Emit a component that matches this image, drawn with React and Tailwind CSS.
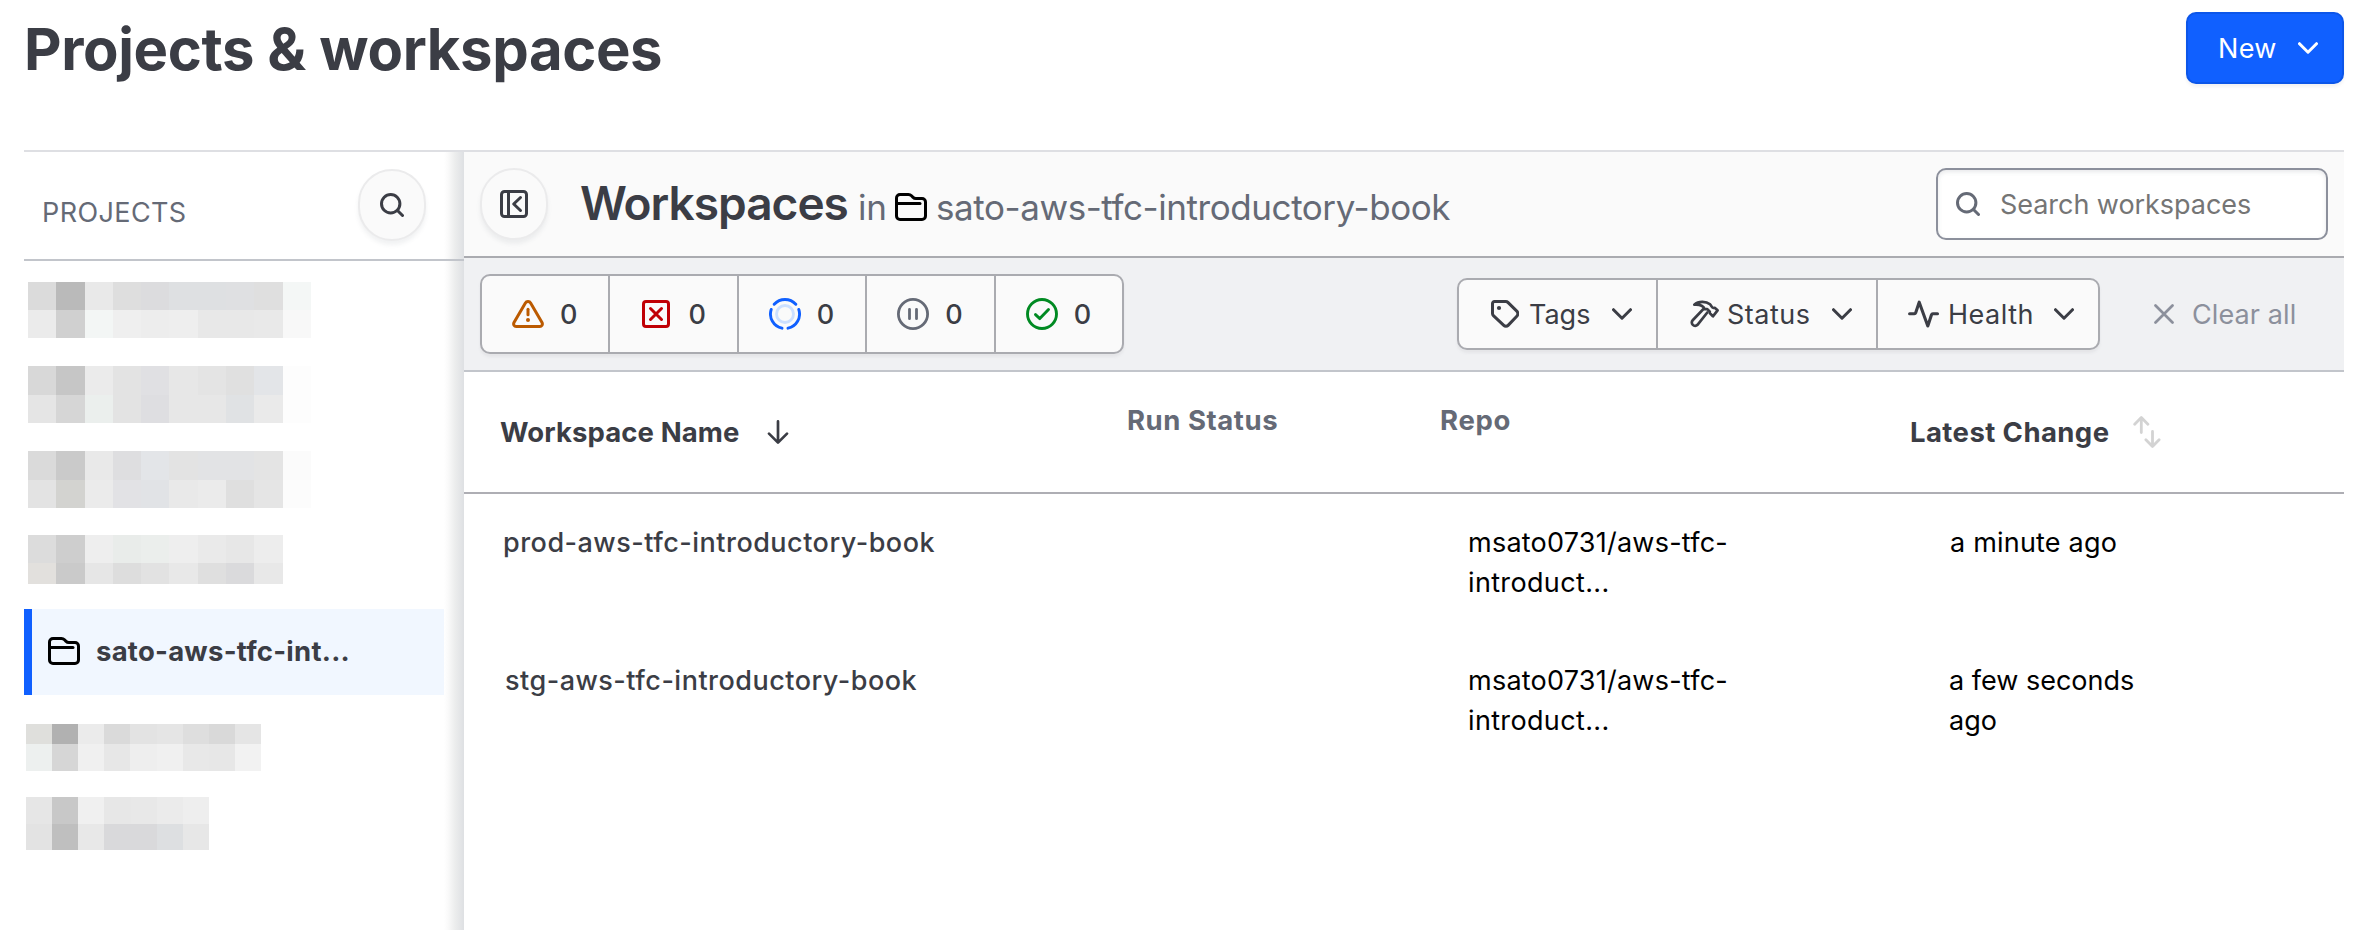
function Icon({ w, h, sw = 3, className = "", children }) {
  return (
    <svg
      width={w}
      height={h}
      viewBox={`0 0 ${w} ${h}`}
      fill="none"
      stroke="currentColor"
      strokeWidth={sw}
      strokeLinecap="round"
      strokeLinejoin="round"
      className={`shrink-0 ${className}`}
    >
      {children}
    </svg>
  );
}

const SearchIcon = ({ className }) => (
  <Icon w={24} h={24} className={className}>
    <circle cx="10.7" cy="10.7" r="9.2" />
    <path d="M17.5 17.5l5 5" />
  </Icon>
);

const Chevron = ({ className }) => (
  <Icon w={20} h={12} className={className}>
    <path d="M1.5 1.7L10 10.2L18.5 1.7" />
  </Icon>
);

const Folder = ({ className }) => (
  <Icon w={32} h={28} className={className}>
    <path d="M1.5 5a3.5 3.5 0 0 1 3.5-3.5h8.4c1.3 0 2.3.5 3.1 1.3l1.3 1.3c.8.8 1.8 1.4 3.1 1.4H27A3.5 3.5 0 0 1 30.5 9v14a3.5 3.5 0 0 1-3.5 3.5H5A3.5 3.5 0 0 1 1.5 23z" />
    <path d="M2 10.4h23" />
  </Icon>
);

const CollapseIcon = () => (
  <Icon w={28} h={28}>
    <rect x="1.5" y="1.5" width="25" height="25" rx="3" />
    <path d="M8.5 1.5v25" />
    <path d="M20.5 7.5L13.7 14l6.8 6.5" />
  </Icon>
);

const WarningIcon = () => (
  <Icon w={32} h={28} className="text-[#bb5a00]">
    <path d="M13.4 3L2 22.6a2.6 2.6 0 0 0 2.2 3.9h23.6a2.6 2.6 0 0 0 2.2-3.9L18.6 3a3 3 0 0 0-5.2 0z" />
    <path d="M16 9.3v5.4" />
    <path d="M16 20h.02" strokeWidth="4" />
  </Icon>
);

const ErrorIcon = () => (
  <Icon w={32} h={28} className="text-[#c00005]">
    <rect x="3.5" y="1.5" width="25" height="25" rx="2.5" />
    <path d="M10.5 8.5l11 11M21.5 8.5l-11 11" />
  </Icon>
);

const RunningIcon = () => (
  <Icon w={32} h={32} sw={2.9} className="text-[#1060ff]">
    <path d="M5.2 6.3a14.5 14.5 0 0 1 21.6 0M29.8 11.5A14.5 14.5 0 0 1 19 30.2M13 30.2A14.5 14.5 0 0 1 2.2 11.5" />
    <circle cx="16" cy="16" r="8.5" stroke="#cce0ff" />
  </Icon>
);

const PausedIcon = () => (
  <Icon w={32} h={32} sw={2.8} className="text-[#656a76]">
    <circle cx="16" cy="16" r="14.6" />
    <path d="M12.5 11.3v9.4M19.5 11.3v9.4" />
  </Icon>
);

const SuccessIcon = () => (
  <Icon w={32} h={32} sw={2.9} className="text-[#008a22]">
    <circle cx="16" cy="16" r="14.5" />
    <path d="M9.5 16.6l4.3 4L22.5 11.5" />
  </Icon>
);

const TagIcon = () => (
  <Icon w={28} h={28}>
    <path d="M1.5 3.5a2 2 0 0 1 2-2h11.3a3 3 0 0 1 2.1.9l8.9 8.7a3.6 3.6 0 0 1 0 5.1l-8.7 9.2a3 3 0 0 1-4.3 0l-10.4-9.8a3 3 0 0 1-.9-2.1z" />
    <circle cx="8" cy="8" r="2.1" fill="currentColor" stroke="none" />
  </Icon>
);

const HammerIcon = () => (
  <Icon w={32} h={32} sw={2.7}>
    <path d="M6.3 6.7C10.5 2.9 18 3 22 6.3c1.5 1.3 1.6 3.6 3.4 3.7l1.3-.2 2.9 2.5-4.7 6-3.1-3.2v-1.5l-2.5-2.5-2.7.1c-.8-3-4.2-4.9-10.3-4.5z" />
    <path d="M15.2 11.3L4.7 22.2a3.3 3.3 0 0 0 4.8 4.6L19.3 14.5" />
  </Icon>
);

const HealthIcon = () => (
  <Icon w={32} h={28} sw={3.1}>
    <path d="M1.6 13.7H6.3a1.5 1.5 0 0 0 1.4-1L11.2 2.2 19.8 26l3.7-11.3a1.5 1.5 0 0 1 1.4-1H29.5" />
  </Icon>
);

const CloseIcon = () => (
  <Icon w={20} h={20} sw={2.7}>
    <path d="M1.5 1.5l17 17M18.5 1.5l-17 17" />
  </Icon>
);

const ArrowDown = () => (
  <Icon w={22} h={24} sw={2.7}>
    <path d="M11 1.4v21M2 13.6l9 9 9-9" />
  </Icon>
);

const SwapIcon = () => (
  <Icon w={28} h={32} sw={2.8} className="text-[#d3d3d3]">
    <path d="M8.3 16.5V1.6M1.7 8.3l6.6-6.7 6.6 6.7M19.5 15.5v14.9M12.9 23.7l6.6 6.7 6.6-6.7" />
  </Icon>
);

const redacted = [
  {
    box: "mt-[21px] ml-[4px] h-[56px] w-[283px]",
    rows: [
      ["bg-[#dbdbdb]", "bg-[#bababa]", "bg-[#e9e9e9]", "bg-[#dedede]", "bg-[#dcdcde]", "bg-[#dee0e2]", "bg-[#dee0e2]", "bg-[#dfe0e2]", "bg-[#dfdfdf]", "bg-[#f4f7f6]"],
      ["bg-[#ebebeb]", "bg-[#d0d0d0]", "bg-[#f3f6f5]", "bg-[#efefef]", "bg-[#ededed]", "bg-[#eeeeee]", "bg-[#e8e8e8]", "bg-[#e8e8e8]", "bg-[#e9e9e9]", "bg-[#f8f8f8]"],
    ],
  },
  {
    box: "mt-[28px] ml-[4px] h-[57px] w-[283px]",
    rows: [
      ["bg-[#d8d8d8]", "bg-[#c6c6c6]", "bg-[#ebebeb]", "bg-[#e3e3e3]", "bg-[#e0e0e3]", "bg-[#e7e7e7]", "bg-[#e4e4e4]", "bg-[#e0e0e0]", "bg-[#e3e5e8]", "bg-[#fdfdfd]"],
      ["bg-[#e5e5e5]", "bg-[#d6d6d6]", "bg-[#ebefed]", "bg-[#e3e3e3]", "bg-[#dedee1]", "bg-[#e7e7e7]", "bg-[#e7e7e7]", "bg-[#e0e2e4]", "bg-[#eaeaea]", "bg-[#fdfdfd]"],
    ],
  },
  {
    box: "mt-[28px] ml-[4px] h-[57px] w-[283px]",
    rows: [
      ["bg-[#dadada]", "bg-[#cacaca]", "bg-[#e9e9e9]", "bg-[#dedee0]", "bg-[#e3e5e8]", "bg-[#e3e3e3]", "bg-[#e2e3e5]", "bg-[#e2e3e5]", "bg-[#e4e4e4]", "bg-[#fbfbfb]"],
      ["bg-[#e3e3e3]", "bg-[#d3d3d0]", "bg-[#ebebeb]", "bg-[#e2e2e5]", "bg-[#e1e3e6]", "bg-[#e9e9e9]", "bg-[#ebebeb]", "bg-[#dfdfdf]", "bg-[#e5e5e5]", "bg-[#fcfcfc]"],
    ],
  },
  {
    box: "mt-[27px] ml-[4px] h-[49px] w-[283px]",
    rows: [
      ["bg-[#dcdcdc]", "bg-[#cecece]", "bg-[#eeeeee]", "bg-[#e9ecea]", "bg-[#ebeeec]", "bg-[#eeeeee]", "bg-[#eaeaea]", "bg-[#e7e7e7]", "bg-[#ededed]", "bg-white"],
      ["bg-[#e2e0dd]", "bg-[#cacaca]", "bg-[#e6e6e6]", "bg-[#dddddd]", "bg-[#e2e2e2]", "bg-[#e8e8e8]", "bg-[#dfdfdf]", "bg-[#dadadc]", "bg-[#e8e8e8]", "bg-white"],
    ],
  },
  {
    box: "mt-[29px] ml-[2px] h-[47px] w-[235px]",
    rows: [
      ["bg-[#dfdfdc]", "bg-[#b1b1b1]", "bg-[#ebebeb]", "bg-[#dadada]", "bg-[#e3e3e3]", "bg-[#e5e5e5]", "bg-[#dedede]", "bg-[#d9d9d9]", "bg-[#e5e5e5]"],
      ["bg-[#edf0ef]", "bg-[#d6d6d6]", "bg-[#f0f0f0]", "bg-[#e7e7e7]", "bg-[#eeeeee]", "bg-[#f0f0f0]", "bg-[#e8e8e8]", "bg-[#e7e7e7]", "bg-[#f2f2f2]"],
    ],
  },
  {
    box: "mt-[26px] ml-[2px] h-[53px] w-[183px]",
    rows: [
      ["bg-[#e6e6e6]", "bg-[#c8c8c8]", "bg-[#f0f0f0]", "bg-[#e7e7e7]", "bg-[#e8e8e8]", "bg-[#ebebeb]", "bg-[#eeeeee]"],
      ["bg-[#e3e3e3]", "bg-[#bfbfbf]", "bg-[#e8e8e8]", "bg-[#d9d9db]", "bg-[#d9d9db]", "bg-[#dddfe1]", "bg-[#e7e7e7]"],
    ],
  },
];

const rowHeights = [
  ["flex-1", "flex-1"],
  ["flex-1", "flex-1"],
  ["flex-1", "flex-1"],
  ["h-[28px]", "flex-1"],
  ["h-[20px]", "flex-1"],
  ["flex-1", "flex-1"],
];

function Redacted({ index }) {
  const item = redacted[index];
  return (
    <div className={`flex flex-col ${item.box}`}>
      {item.rows.map((row, r) => (
        <div key={r} className={`flex ${rowHeights[index][r]}`}>
          {row.map((c, i) => (
            <div key={i} className={`flex-1 ${c}`} />
          ))}
        </div>
      ))}
    </div>
  );
}

function RoundButton({ className = "", children }) {
  return (
    <button
      className={`flex h-[72px] w-[68px] shrink-0 items-center justify-center rounded-[34px] border-2 border-[#ebebec] bg-[#fafafa] text-[#3b3d45] shadow-[0_4px_4px_rgba(101,106,118,0.09)] ${className}`}
    >
      {children}
    </button>
  );
}

const statuses = [WarningIcon, ErrorIcon, RunningIcon, PausedIcon, SuccessIcon];

export default function App() {
  return (
    <div className="flex h-[930px] w-[2374px] flex-col overflow-hidden bg-white pr-[30px] pl-6 font-['Inter',sans-serif] text-[27px] leading-[40px] text-[#3b3d45]">
      <header className="flex h-[150px] items-start justify-between">
        <h1 className="pt-[9px] text-[58px] leading-[80px] font-bold tracking-[-0.38px]">
          Projects &amp; workspaces
        </h1>
        <button className="mt-3 flex h-[72px] w-[158px] items-center rounded-[10px] border-2 border-[#0c56e9] bg-[#1060ff] pl-[30px] text-white shadow-[0_3px_3px_rgba(101,106,118,0.08)]">
          <span className="w-[80px] pt-px text-left tracking-[0.3px]">New</span>
          <Chevron />
        </button>
      </header>

      <div className="flex flex-1 border-t-2 border-[#dedfe3]">
        <aside className="flex w-[440px] flex-col bg-[linear-gradient(to_left,#dee0e3_0px,#eceded_9px,#fafafa_16px,#ffffff_20px)]">
          <div className="flex h-[109px] items-start border-b-2 border-[#c2c5cb] pl-[18px]">
            <h2 className="w-[316px] pt-[41px] tracking-[0.4px] text-[#656a76]">PROJECTS</h2>
            <RoundButton className="mt-[17px]">
              <SearchIcon />
            </RoundButton>
          </div>
          <Redacted index={0} />
          <Redacted index={1} />
          <Redacted index={2} />
          <Redacted index={3} />
          <div className="mt-[25px] flex h-[86px] w-[420px] items-center border-l-8 border-[#1060ff] bg-[#f1f7ff] pl-4">
            <Folder className="-mt-[2px] text-black" />
            <span className="-mt-[3px] pl-[16px] text-[27.5px] font-bold tracking-[0.25px]">
              sato-aws-tfc-int...
            </span>
          </div>
          <Redacted index={4} />
          <Redacted index={5} />
        </aside>

        <main className="flex flex-1 flex-col">
          <div className="flex h-[106px] items-start justify-between border-b-2 border-[#aaabb0] bg-[#fafafa] pt-4 pr-4 pl-4">
            <div className="flex">
              <RoundButton>
                <CollapseIcon />
              </RoundButton>
              <div className="flex h-[72px] items-baseline pt-[5px] pl-[32px]">
                <h2 className="text-[46px] leading-[60px] font-semibold tracking-[-1px]">Workspaces</h2>
                <span className="pl-[10px] text-[35px] text-[#656a76]">in</span>
                <Folder className="relative top-[1px] ml-[8px] text-black" />
                <span className="pl-[9px] text-[35px] tracking-[-0.43px] text-[#656a76]">
                  sato-aws-tfc-introductory-book
                </span>
              </div>
            </div>
            <div className="flex h-[72px] w-[392px] items-center rounded-[10px] border-2 border-[#8c909c] bg-white pl-[18px] shadow-[inset_0_2px_4px_rgba(101,106,118,0.15)]">
              <SearchIcon className="text-[#656a76]" />
              <span className="pt-px pl-[20px] tracking-[-0.05px] text-[#757575]">Search workspaces</span>
            </div>
          </div>

          <div className="flex h-[114px] items-center border-b-2 border-[#c2c5cb] bg-[#f0f1f3] pl-4">
            <div className="flex h-[80px] w-[644px] rounded-[10px] border-2 border-[#aaabb0] bg-[#fafafa] shadow-[0_3px_3px_rgba(101,106,118,0.08)]">
              {statuses.map((StatusIcon, i) => (
                <div
                  key={i}
                  className={`flex flex-1 items-center gap-[16px] pl-[30px] ${i < 4 ? "border-r-2 border-[#aaabb0]" : ""}`}
                >
                  <StatusIcon />
                  <span className="pt-px font-medium">0</span>
                </div>
              ))}
            </div>

            <div className="ml-[333px] flex h-[72px] w-[643px] rounded-[10px] border-2 border-[#aaabb0] bg-[#fafafa] shadow-[0_3px_3px_rgba(101,106,118,0.08)]">
              <div className="flex w-[199px] items-center border-r-2 border-[#aaabb0] pl-[32px]">
                <TagIcon />
                <span className="w-[93px] pt-px pl-[10px]">Tags</span>
                <Chevron />
              </div>
              <div className="flex w-[220px] items-center border-r-2 border-[#aaabb0] pl-[30px]">
                <HammerIcon />
                <span className="w-[112px] pt-px pl-[7px] tracking-[0.5px]">Status</span>
                <Chevron />
              </div>
              <div className="flex flex-1 items-center pl-[30px]">
                <HealthIcon />
                <span className="w-[114px] pt-px pl-[8px] tracking-[0.5px]">Health</span>
                <Chevron />
              </div>
            </div>

            <button className="ml-[54px] flex items-center gap-[18px] text-[#8c909c]">
              <CloseIcon />
              <span className="pt-px tracking-[0.1px]">Clear all</span>
            </button>
          </div>

          <div className="flex h-[122px] items-center border-b-2 border-[#aeaeb4] pl-[36px] text-[27.5px] font-bold">
            <div className="flex w-[627px] items-center">
              <span className="w-[267px] tracking-[0.1px]">Workspace Name</span>
              <ArrowDown />
            </div>
            <div className="-mt-6 w-[313px] tracking-[0.55px] text-[#656a76]">Run Status</div>
            <div className="-mt-6 w-[470px] tracking-[0.7px] text-[#656a76]">Repo</div>
            <div className="flex items-center">
              <span className="w-[223px] tracking-[0.42px]">Latest Change</span>
              <SwapIcon />
            </div>
          </div>

          <div className="flex h-[138px] pt-[29px]">
            <div className="w-[1004px] pl-[39px] font-medium tracking-[0.49px]">
              prod-aws-tfc-introductory-book
            </div>
            <div className="w-[482px] text-black">
              <div className="tracking-[0.24px]">msato0731/aws-tfc-</div>
              <div className="tracking-[0.35px]">introduct...</div>
            </div>
            <div className="tracking-[0.2px] text-black">a minute ago</div>
          </div>
          <div className="flex h-[138px] pt-[29px]">
            <div className="w-[1004px] pl-[41px] font-medium tracking-[0.49px]">
              stg-aws-tfc-introductory-book
            </div>
            <div className="w-[481px] text-black">
              <div className="tracking-[0.24px]">msato0731/aws-tfc-</div>
              <div className="tracking-[0.35px]">introduct...</div>
            </div>
            <div className="w-[200px] text-black">a few seconds ago</div>
          </div>
        </main>
      </div>
    </div>
  );
}
